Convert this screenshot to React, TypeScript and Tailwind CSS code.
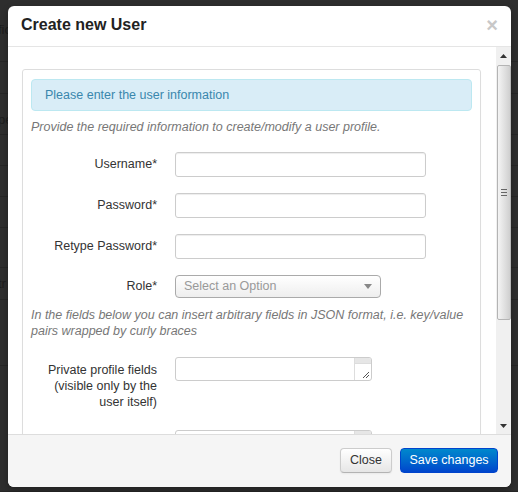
import React from "react";

const bgRows = [
  { h: 62, t: "fic", ty: 20 },
  { h: 32, t: "", ty: 0 },
  { h: 41, t: "pe", ty: 16 },
  { h: 31, t: "", ty: 0 },
  { h: 31, t: "", ty: 0 },
  { h: 31, t: "", ty: 0 },
  { h: 40, t: "", ty: 0 },
  { h: 32, t: "tr", ty: 6 },
  { h: 66, t: "", ty: 0 },
  { h: 126, t: "", ty: 0 },
];

function Field({ label }: { label: string }) {
  return (
    <div className="flex items-center mb-[16px]">
      <label className="w-[126px] text-right text-[12.5px] text-[#333]">{label}</label>
      <input
        type="text"
        className="ml-[18px] w-[251px] h-[25px] border border-[#ccc] rounded-[3px] bg-white shadow-[inset_0_1px_1px_rgba(0,0,0,0.075)] outline-none"
      />
    </div>
  );
}

function FakeTextarea() {
  return (
    <div className="ml-[18px] w-[197px] h-[24px] border border-[#ccc] rounded-[3px] bg-white flex overflow-hidden">
      <div className="flex-1" />
      <div className="w-[17px] border-l border-[#ddd] flex flex-col">
        <div className="h-[6px] bg-[#e6e6e6] border-b border-[#ddd]" />
        <div className="flex-1 flex items-end justify-end pr-[1px] pb-[1px]">
          <svg width="8" height="8" viewBox="0 0 8 8">
            <path d="M7 1 L1 7 M7 4 L4 7" stroke="#555" strokeWidth="1" />
          </svg>
        </div>
      </div>
    </div>
  );
}

export default function App() {
  return (
    <div className="relative w-[518px] h-[492px] overflow-hidden bg-[#2e2e2e] font-['Liberation_Sans',Arial,sans-serif]">
      {/* page behind the overlay */}
      <div className="flex flex-col">
        {bgRows.map((r, i) => (
          <div
            key={i}
            className="border-b border-[#262626] text-[13px] text-[#1d1d1d] -ml-[2px]"
            style={{ height: r.h, paddingTop: r.ty }}
          >
            {r.t}
          </div>
        ))}
      </div>

      <div className="absolute left-[8px] top-[6px] w-[503px] h-[481px] bg-white rounded-[6px] shadow-[0_3px_7px_rgba(0,0,0,0.3)] flex flex-col overflow-hidden">
        <div className="h-[41px] shrink-0 border-b border-[#e5e5e5] flex items-center justify-between pl-[13px] pr-[13px] pb-[2px]">
          <h3 className="text-[16px] font-bold text-[#222]">Create new User</h3>
          <span className="text-[20px] font-bold leading-none text-[#c8c8c8]">×</span>
        </div>

        <div className="flex flex-1 min-h-0">
          <div className="flex-1 overflow-hidden pl-[14px] pr-[15px] pt-[22px]">
            <div className="border border-[#ddd] rounded-[3px] px-[8px] pt-[9px] shadow-[0_1px_1px_rgba(0,0,0,0.05)] h-[400px]">
              <div className="h-[32px] bg-[#d9edf7] border border-[#bce8f1] rounded-[4px] pl-[13px] flex items-center text-[12.5px] text-[#3a87ad]">
                Please enter the user information
              </div>
              <p className="mt-[7px] text-[12.5px] leading-[18px] italic text-[#777]">
                Provide the required information to create/modify a user profile.
              </p>
              <div className="mt-[16px]">
                <Field label="Username*" />
                <Field label="Password*" />
                <Field label="Retype Password*" />
                <div className="flex items-center">
                  <label className="w-[126px] text-right text-[12.5px] text-[#333]">Role*</label>
                  <div className="ml-[18px] w-[206px] h-[23px] border border-[#aaa] rounded-[4px] bg-gradient-to-b from-white to-[#eeeeee] flex items-center justify-between pl-[8px] pr-[8px]">
                    <span className="text-[12.5px] text-[#999]">Select an Option</span>
                    <svg width="8" height="5" viewBox="0 0 8 5">
                      <path d="M0 0 L8 0 L4 5 Z" fill="#888" />
                    </svg>
                  </div>
                </div>
              </div>
              <p className="mt-[9px] text-[12.5px] leading-[16px] italic text-[#777]">
                In the fields below you can insert arbitrary fields in JSON format, i.e. key/value pairs wrapped by curly braces
              </p>
              <div className="mt-[18px] flex items-start">
                <label className="w-[126px] mt-[5px] text-right text-[12.5px] leading-[16px] text-[#333]">
                  Private profile fields
                  <br />
                  (visible only by the
                  <br />
                  user itself)
                </label>
                <FakeTextarea />
              </div>
              <div className="mt-[20px] flex items-start">
                <label className="w-[126px] mt-[5px] text-right text-[12.5px] leading-[16px] text-[#333]">
                  Public profile fields
                </label>
                <FakeTextarea />
              </div>
            </div>
          </div>

          <div className="w-[15px] shrink-0 bg-[#f0f0f0] flex flex-col items-center">
            <div className="h-[17px] flex items-center justify-center">
              <svg width="7" height="4" viewBox="0 0 7 4">
                <path d="M0 4 L7 4 L3.5 0 Z" fill="#333" />
              </svg>
            </div>
            <div className="w-[14px] h-[255px] mt-[1px] border border-[#b4b4b4] rounded-[2px] bg-gradient-to-r from-[#f4f4f4] via-[#e2e2e2] to-[#cfcfcf] flex items-center justify-center">
              <div className="flex flex-col gap-[2px]">
                <div className="w-[6px] h-px bg-[#666]" />
                <div className="w-[6px] h-px bg-[#666]" />
                <div className="w-[6px] h-px bg-[#666]" />
              </div>
            </div>
            <div className="flex-1" />
            <div className="h-[17px] flex items-center justify-center">
              <svg width="7" height="4" viewBox="0 0 7 4">
                <path d="M0 0 L7 0 L3.5 4 Z" fill="#333" />
              </svg>
            </div>
          </div>
        </div>

        <div className="h-[53px] shrink-0 border-t border-[#ddd] bg-[#f5f5f5] flex items-start justify-end gap-[8px] pt-[13px] pr-[13px]">
          <button className="w-[52px] h-[25px] border border-[#ccc] border-b-[#b3b3b3] rounded-[4px] bg-gradient-to-b from-white to-[#e6e6e6] text-[12.5px] text-[#333] shadow-[0_1px_2px_rgba(0,0,0,0.05)]">
            Close
          </button>
          <button className="w-[98px] h-[25px] border border-[#0044cc] rounded-[4px] bg-gradient-to-b from-[#0088cc] to-[#0044cc] text-[12.5px] text-white">
            Save changes
          </button>
        </div>
      </div>
    </div>
  );
}
